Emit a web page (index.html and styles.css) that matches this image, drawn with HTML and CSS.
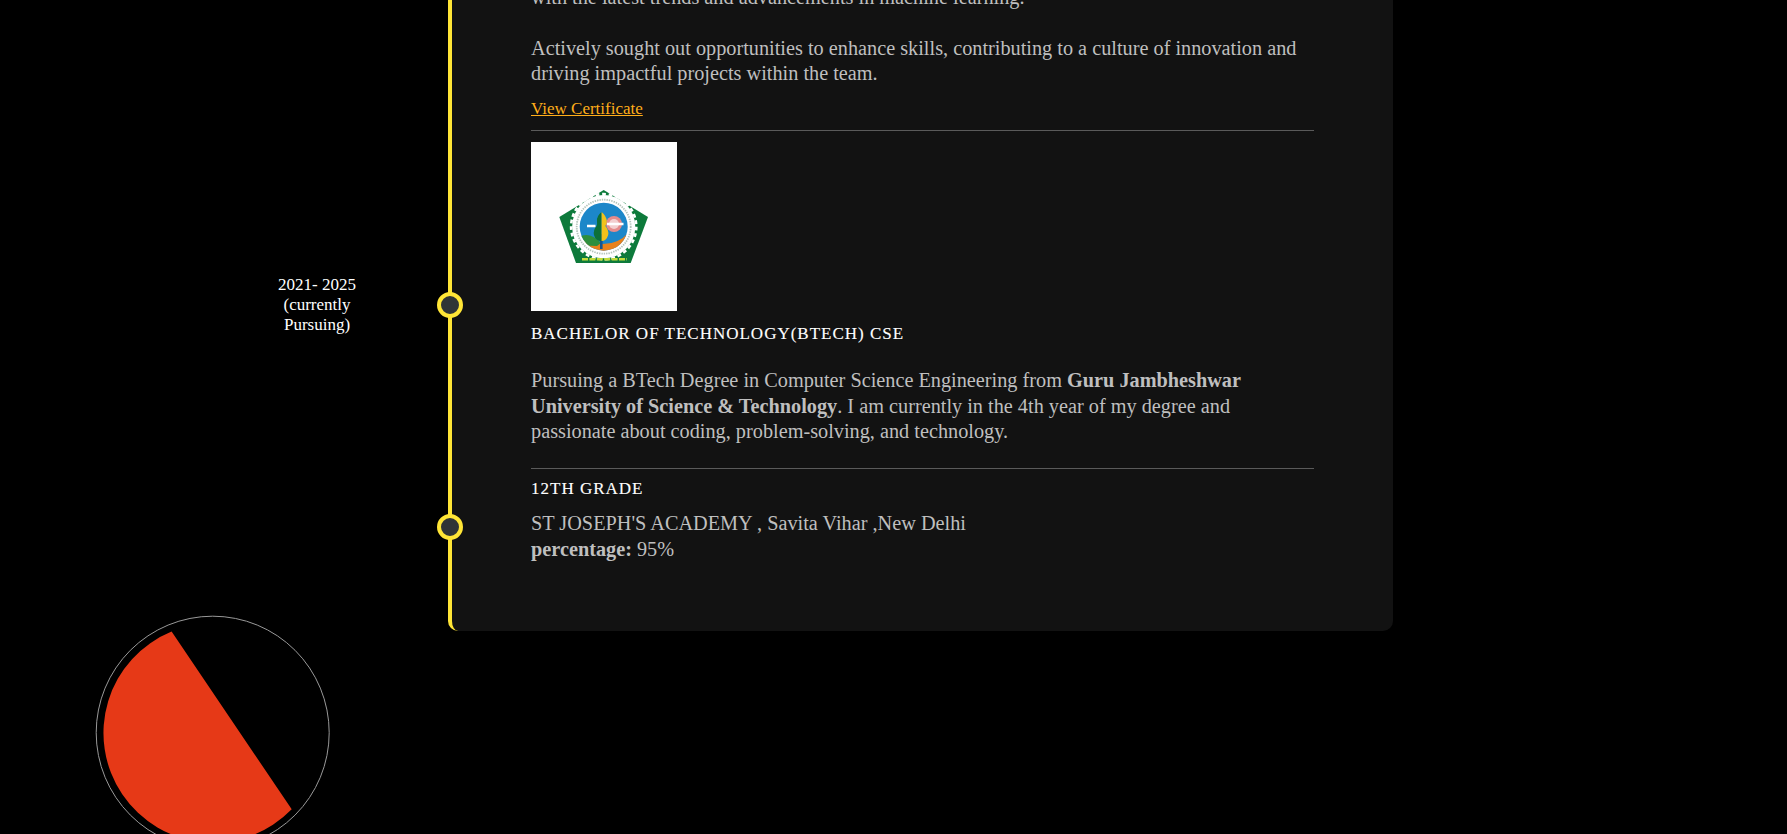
FILE: index.html
```html
<!DOCTYPE html>
<html lang="en">
<head>
    <meta charset="UTF-8">
    <meta name="viewport" content="width=device-width, initial-scale=1.0">
    <title>Education</title>
    <link rel="stylesheet" href="styles.css">
</head>
<body>
    <div class="page">
        <section class="timeline">
            <div class="dates">
                <div class="date">2021- 2025 (currently Pursuing)</div>
            </div>
            <div class="card">
                <span class="dot dot-btech"></span>
                <span class="dot dot-school"></span>

                <p class="text">with the latest trends and advancements in machine learning.</p>
                <p class="text gap">Actively sought out opportunities to enhance skills, contributing to a culture of innovation and driving impactful projects within the team.</p>
                <a class="cert" href="#">View Certificate</a>
                <hr>

                <svg class="logo" viewBox="0 0 146 169" role="img" aria-label="University logo">
                    <defs>
                        <filter id="soft"><feGaussianBlur stdDeviation="0.55"/></filter>
                        <clipPath id="disc"><circle cx="72.7" cy="84.7" r="24"/></clipPath>
                    </defs>
                    <rect width="146" height="169" fill="#fff"/>
                    <g filter="url(#soft)">
                        <path d="M72.7 48 L117 75 L99.7 121 H45 L28.3 75 Z" fill="#0b7a3b"/>
                        <!-- gear edge -->
                        <circle cx="72.7" cy="84.7" r="32.6" fill="none" stroke="#fff" stroke-width="2.6" stroke-dasharray="3.8 2.8"/>
                        <circle cx="72.7" cy="84.7" r="31.6" fill="#fff"/>
                        <circle cx="72.7" cy="84.7" r="27" fill="none" stroke="#b4c4bb" stroke-width="1.8" stroke-dasharray="1.4 1"/>
                        <circle cx="72.7" cy="84.7" r="24" fill="#1b87c9"/>
                        <g clip-path="url(#disc)">
                            <path d="M46 100 Q60 96 72 102 Q88 102 98 90 V112 H46 Z" fill="#e8811f"/>
                            <path d="M46 96 Q58 88 70 101 L66 104 Q56 103 46 105 Z" fill="#2f8f3d"/>
                        </g>
                        <circle cx="83" cy="82" r="8" fill="#e58b8b"/>
                        <circle cx="83" cy="82" r="5" fill="#f3cfcf"/>
                        <path d="M56 84 H64.5 M76 82 H92.5" stroke="#fff" stroke-width="2.4"/>
                        <rect x="69" y="92" width="2.6" height="15" fill="#14558f"/>
                        <path d="M70.6 70 Q65.6 74 66 79 Q66.4 82 65.6 84 Q62 88 63 93 Q64.6 99 70.6 99 Z" fill="#0b6f37"/>
                        <path d="M70.6 70 Q75.4 74 75.8 79 Q75.8 82 74.4 84 Q78 88 77.2 93 Q75.4 99 70.6 99 Z" fill="#f2c21b"/>
                        <line x1="51" y1="117.3" x2="96" y2="117.3" stroke="#c3dc3a" stroke-width="2.4" stroke-dasharray="6 1.4"/>
                    </g>
                </svg>
                <h3 class="title first">Bachelor of Technology(BTech) CSE</h3>
                <p class="text lead">Pursuing a BTech Degree in Computer Science Engineering from <b>Guru Jambheshwar University of Science &amp; Technology</b>. I am currently in the 4th year of my degree and passionate about coding, problem-solving, and technology.</p>
                <hr class="second">

                <h3 class="title grade">12th Grade</h3>
                <p class="text school">ST JOSEPH'S ACADEMY , Savita Vihar ,New Delhi<br><b>percentage:</b> 95%</p>
            </div>
        </section>

        <!-- scroll progress thing, bottom left -->
        <svg class="blob" width="236" height="236" viewBox="0 0 236 236">
            <circle cx="117.7" cy="117.7" r="116.5" fill="none" stroke="#999" stroke-width="1"/>
            <path d="M76.6 16.5 A109.6 109.6 0 1 0 196.7 194.3 Z" fill="#e63917"/>
        </svg>
    </div>
</body>
</html>
```

FILE: styles.css
```css
* {
    box-sizing: border-box;
}
body {
    margin: 0;
    background: #000;
    font-family: "Liberation Serif", "Times New Roman", serif;
}
.page {
    position: relative;
    height: 834px;
    overflow: hidden;
}
.timeline {
    display: flex;
    align-items: flex-start;
    margin-top: -15px;
    padding-left: 268px;
}
.dates {
    width: 180px;
    padding-top: 290px;
}
.date {
    width: 96px;
    margin-left: 1px;
    color: #fff;
    font-size: 17px;
    line-height: 20px;
    text-align: center;
}
.card {
    position: relative;
    width: 945px;
    height: 646px;
    padding-left: 79px;
    padding-right: 79px;
    background: #121212;
    border-left: 4px solid #ffe536;
    border-radius: 0 10px 10px 10px;
}
.dot {
    position: absolute;
    left: -15px;
    width: 26px;
    height: 26px;
    background: #303436;
    border: 4px solid #ffe536;
    border-radius: 50%;
}
.dot-btech {
    top: 307px;
}
.dot-school {
    top: 529px;
}
.text {
    margin: 0;
    color: #bfbfbf;
    font-size: 20.27px;
    line-height: 25.6px;
}
.gap {
    margin-top: 25px;
}
.cert {
    display: block;
    margin-top: 11px;
    color: #ffae1a;
    font-size: 17px;
    line-height: 22px;
}
hr {
    height: 1px;
    margin: 10px 0 0;
    background: #5a5a5a;
    border: 0;
}
.logo {
    display: block;
    width: 146px;
    height: 169px;
    margin-top: 11px;
}
.title {
    margin: 13px 0 0;
    color: #fff;
    font-size: 17px;
    font-weight: normal;
    line-height: 20px;
    letter-spacing: 1px;
    text-transform: uppercase;
    -webkit-text-stroke: 0.12px #fff;
}
.grade {
    margin-top: 10px;
}
.lead {
    margin-top: 24.4px;
    width: 730px;
}
hr.second {
    margin-top: 22.6px;
}
.school {
    margin-top: 12.4px;
}
.blob {
    position: absolute;
    left: 95px;
    top: 615px;
}
```
